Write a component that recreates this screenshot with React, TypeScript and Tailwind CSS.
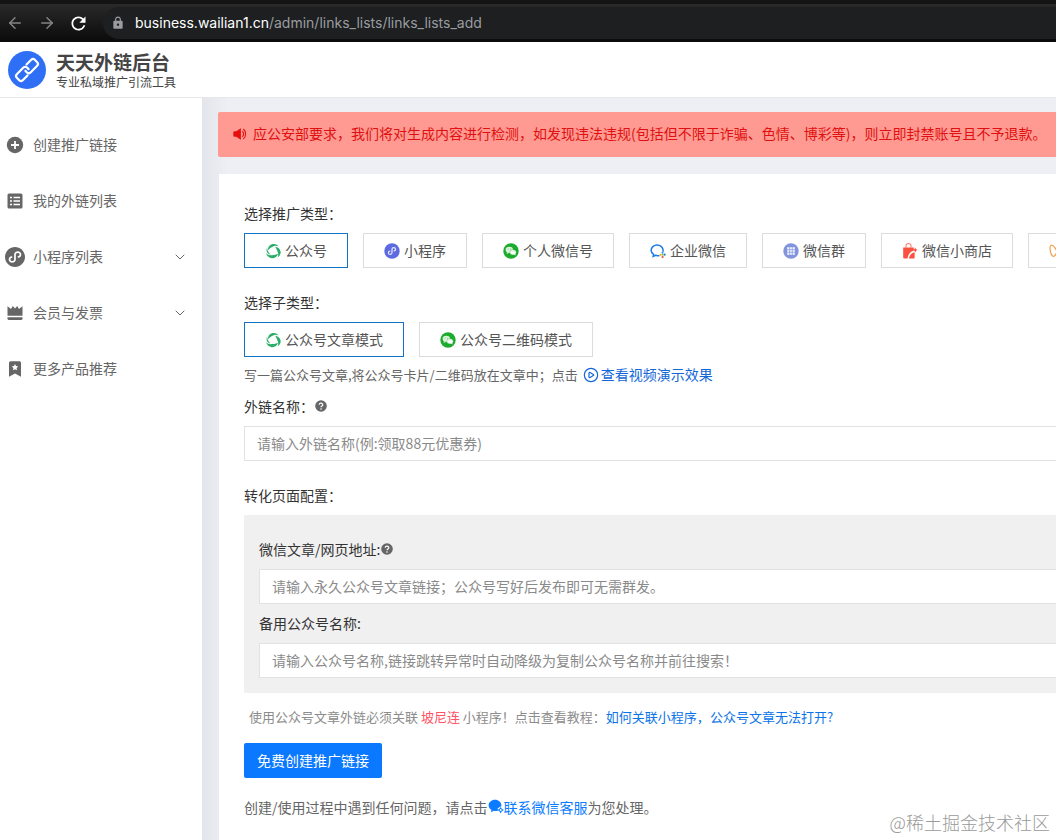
import React from 'react';
import { ArrowLeft, ArrowRight, ChevronDown, CirclePlay } from 'lucide-react';
import { RiMiniProgramFill } from 'react-icons/ri';
import { MdLock, MdRefresh } from 'react-icons/md';

interface IconProps {
  className?: string;
}

const LinkLogo: React.FC = () => (
  <svg viewBox="0 0 38 38" className="size-[38px] shrink-0" aria-hidden="true">
    <circle cx="19" cy="19" r="19" fill="#2f6ff5" />
    <g transform="rotate(-45 19 19)" fill="none" stroke="#fff" strokeWidth="2.200" strokeLinecap="round" strokeLinejoin="round">
      <path d="M15.500 23.200H8.800a2.500 2.500 0 0 1-2.500-2.500v-3.400a2.500 2.500 0 0 1 2.500-2.500h9.400a2.500 2.500 0 0 1 2.500 2.500v2.200" />
      <path d="M22.500 14.800h6.700a2.500 2.500 0 0 1 2.500 2.500v3.400a2.500 2.500 0 0 1-2.500 2.500h-9.400a2.500 2.500 0 0 1-2.500-2.500v-2.200" />
    </g>
  </svg>
);

const AddIcon: React.FC = () => (
  <svg viewBox="0 0 18 18" className="size-[18px]" aria-hidden="true">
    <circle cx="9" cy="9" r="8.200" fill="currentColor" />
    <path d="M9 5v8M5 9h8" stroke="#fff" strokeWidth="1.800" />
  </svg>
);

const ListIcon: React.FC = () => (
  <svg viewBox="0 0 18 18" className="size-[18px]" aria-hidden="true">
    <rect x="1.500" y="1.500" width="15" height="15" rx="1.500" fill="currentColor" />
    <path d="M4 5.500h2M7.500 5.500H14M4 9h2M7.500 9H14M4 12.500h2M7.500 12.500H14" stroke="#fff" strokeWidth="1.400" />
  </svg>
);

const CrownIcon: React.FC = () => (
  <svg viewBox="0 0 18 18" className="size-[18px]" fill="currentColor" aria-hidden="true">
    <path d="M1.500 2.200 5 5l1.800-3L9 4.600 11.200 2 13 5l3.500-2.800v9.600h-15z" />
    <path d="M1.500 13.300h15v1.200a1.500 1.500 0 0 1-1.500 1.500H3a1.500 1.500 0 0 1-1.500-1.500z" />
  </svg>
);

const BookmarkIcon: React.FC = () => (
  <svg viewBox="0 0 18 18" className="size-[18px]" aria-hidden="true">
    <path d="M4.500 1.200h9A1.500 1.500 0 0 1 15 2.700v14.100L9 13.500l-6 3.300V2.700a1.500 1.500 0 0 1 1.500-1.500z" fill="currentColor" />
    <path d="m9 4 1 2.100 2.300.3-1.700 1.600.4 2.300L9 9.200l-2 1.100.4-2.300-1.700-1.600L8 6.100z" fill="#fff" />
  </svg>
);

const OfficialIcon: React.FC<IconProps> = ({ className }) => (
  <svg viewBox="0 0 16 16" className={className} fill="#2aae67" aria-hidden="true">
    <path d="M3 7.300C2.600 3.600 5.600.8 9 1c2 .1 3.500 1 4.500 2.600-2-1.200-4-1-5.400-.1C6 4.400 4.700 5.600 3 7.300z" />
    <path d="M10.200 3.800c3.800.5 6.100 3.700 5.300 6.800-.4 1.700-1.500 3-3 3.800.9-1.700 1-3.400.3-5-.6-1.700-1.300-3.600-2.600-5.600z" />
    <path d="M13 10.800c-.7 3.200-4 5-7 4.200-2.500-.6-4.400-2.500-4.900-5 1.200 1.500 2.700 2.200 4.400 2.200 2.200 0 4.800-.2 7.500-1.400z" />
    <path d="M2 4.800C.8 8.300 2.300 11 5.500 11.600 3.800 10 2.600 8 2 4.800z" />
  </svg>
);

const WechatIcon: React.FC<IconProps> = ({ className }) => (
  <svg viewBox="0 0 16 16" className={className} aria-hidden="true">
    <circle cx="8" cy="8" r="7.700" fill="#1cab2c" />
    <ellipse cx="6.300" cy="6.800" rx="3.700" ry="3.100" fill="#d9f3dc" />
    <path d="m4 9-.4 1.900 2-1z" fill="#d9f3dc" />
    <ellipse cx="10" cy="9.300" rx="3.200" ry="2.600" fill="#fff" stroke="#1cab2c" strokeWidth=".4" />
    <path d="m11 11.500 1.500.9-.2-1.600z" fill="#fff" />
    <g fill="#1cab2c">
      <circle cx="5.100" cy="6" r=".4" />
      <circle cx="7.500" cy="6" r=".4" />
      <circle cx="9" cy="8.700" r=".3" />
      <circle cx="11" cy="8.700" r=".3" />
    </g>
  </svg>
);

const MiniIcon: React.FC<IconProps> = ({ className }) => (
  <svg viewBox="0 0 16 16" className={className} fill="none" aria-hidden="true">
    <circle cx="8" cy="8" r="7.700" fill="#5d6be0" />
    <path
      d="M5.900 8.200a1.800 1.600 0 1 0 2.100 1.600V6.200a1.800 1.600 0 1 1 2.100 1.600"
      stroke="#e6e9ff"
      strokeWidth="1.200"
      strokeLinecap="round"
    />
  </svg>
);

const WorkIcon: React.FC<IconProps> = ({ className }) => (
  <svg viewBox="0 0 16 16" className={className} fill="none" aria-hidden="true">
    <path
      d="M9.500 12.400c-1.200.3-2.700.3-3.900-.1l-2.400 1.200.4-2.200C2 10.200 1.100 8.800 1.100 7.200c0-2.900 2.700-5.100 6-5.100s6 2.200 6 5.100c0 .6-.1 1.100-.3 1.600"
      stroke="#1b7be8"
      strokeWidth="1.500"
    />
    <circle cx="12.500" cy="9.800" r="1" fill="#1b9be8" />
    <circle cx="14.600" cy="11.700" r="1.100" fill="#2a78c8" />
    <circle cx="12.600" cy="14" r="1.100" fill="#e8503a" />
    <circle cx="10.700" cy="11.800" r="1.100" fill="#f7b500" />
    <circle cx="12.700" cy="11.900" r=".8" fill="#7cc04b" />
  </svg>
);

const GroupIcon: React.FC<IconProps> = ({ className }) => (
  <svg viewBox="0 0 16 16" className={className} aria-hidden="true">
    <circle cx="8" cy="8" r="7.700" fill="#8295dc" />
    <rect x="4.200" y="4.200" width="7.600" height="7.600" fill="#fff" opacity=".9" />
    <path d="M4 6.700h8M4 9.300h8M6.700 4v8M9.300 4v8" stroke="#8295dc" strokeWidth=".7" />
  </svg>
);

const ShopIcon: React.FC<IconProps> = ({ className }) => (
  <svg viewBox="0 0 16 16" className={className} fill="none" aria-hidden="true">
    <path d="M1.200 4.500h10.600v3.300C8.500 8.500 6.300 10.800 5.500 15.600H2.200a1 1 0 0 1-1-1z" fill="#fa5140" />
    <path d="M12.600 9.300v5.300a1 1 0 0 1-1 1H6.900c.6-3.400 2.500-5.600 5.700-6.300z" fill="#fa5140" />
    <path d="M4 5V3a2.500 2.500 0 0 1 5 0v2" stroke="#fa8a7e" strokeWidth="1.200" />
    <path d="m13.300 4.600.8 1.600 1.700.7-1.700.8-.8 1.700-.8-1.700-1.600-.8 1.600-.7z" fill="#fa5140" />
  </svg>
);

const ChannelIcon: React.FC<IconProps> = ({ className }) => (
  <svg viewBox="0 0 16 16" className={className} fill="none" stroke="#f3a04b" strokeWidth="1.200" aria-hidden="true">
    <path d="M8 8.500C6.500 4.500 3.500 1.500 2 2.200c-1.700.8-.9 8.500 1.300 10.600C5 14.400 7 12 8 8.500z" />
    <path d="M8 8.500c1.500-4 4.500-7 6-6.300 1.700.8.900 8.500-1.300 10.600C11 14.400 9 12 8 8.500z" />
  </svg>
);

const HelpIcon: React.FC<IconProps> = ({ className }) => (
  <svg viewBox="0 0 12 12" className={className} fill="none" aria-hidden="true">
    <circle cx="6" cy="6" r="5.800" fill="#666" />
    <path d="M4.200 4.700a1.800 1.600 0 1 1 2.600 1.400c-.6.3-.8.500-.8 1.100" stroke="#fff" strokeWidth="1.200" />
    <circle cx="6" cy="9" r=".8" fill="#fff" />
  </svg>
);

const SpeakerIcon: React.FC = () => (
  <svg viewBox="0 0 14 14" className="size-[14px] shrink-0" fill="#e60f0f" aria-hidden="true">
    <path d="M1.500 4.200h1.700L7.900 1.300v11.400L3.200 9.800H1.500A1.200 1.200 0 0 1 .3 8.600V5.400a1.200 1.200 0 0 1 1.200-1.200z" />
    <path d="M9.300 4.200c1.700 1.300 1.700 4.300 0 5.600M10.300 2c3 2.200 3 7.800 0 10" fill="none" stroke="#e60f0f" strokeWidth="1.100" />
  </svg>
);

const ServiceIcon: React.FC = () => (
  <svg viewBox="0 0 16 16" className="size-4 shrink-0" fill="#0b7cff" aria-hidden="true">
    <path d="M7 .8c3.600 0 6.400 2.500 6.400 5.500l-.1 1.300c-1.500-.5-1.900 1.100-3.300 1.500-.8 1 .2 1.600.1 2.400-1.200.6-3 .7-4.300.3L3 13.200l.4-2.400C1.600 9.800.6 8.200.6 6.300.6 3.300 3.400.8 7 .8z" />
    <path d="m12.700 8 1.100 1.800 2.100 1.200-2.100 1.300-1.100 2.100-1.300-2.100-1.900-1.300 1.900-1.200z" />
    <circle cx="12.700" cy="11.100" r="1" fill="#fff" />
  </svg>
);

const menu = [
  { label: '创建推广链接', icon: <AddIcon /> },
  { label: '我的外链列表', icon: <ListIcon /> },
  { label: '小程序列表', icon: <RiMiniProgramFill className="-m-[3px] size-6" />, more: true },
  { label: '会员与发票', icon: <CrownIcon />, more: true },
  { label: '更多产品推荐', icon: <BookmarkIcon /> },
];

const types = [
  { label: '公众号', Icon: OfficialIcon },
  { label: '小程序', Icon: MiniIcon },
  { label: '个人微信号', Icon: WechatIcon },
  { label: '企业微信', Icon: WorkIcon },
  { label: '微信群', Icon: GroupIcon },
  { label: '微信小商店', Icon: ShopIcon },
  { label: '视频号', Icon: ChannelIcon },
];

const modes = [
  { label: '公众号文章模式', Icon: OfficialIcon },
  { label: '公众号二维码模式', Icon: WechatIcon },
];

interface OptionProps {
  label: string;
  Icon: React.FC<IconProps>;
  active: boolean;
  onClick: () => void;
}

const OptionButton: React.FC<OptionProps> = ({ label, Icon, active, onClick }) => (
  <button
    type="button"
    aria-pressed={active}
    onClick={onClick}
    className={`flex h-[35px] shrink-0 items-center gap-1 border px-5 text-[#555] ${active ? 'border-[#1272c4]' : 'border-[#dcdcdc]'}`}
  >
    <Icon className="size-4" />
    <span className="pb-0.5">{label}</span>
  </button>
);

const inputClass =
  'mt-[11px] block h-[35px] w-full border border-r-0 border-[#e2e2e2] bg-white px-3 pb-0.5 text-[#333] outline-none placeholder:text-[#8a8a8a]';

export default function App() {
  const [type, setType] = React.useState(0);
  const [mode, setMode] = React.useState(0);

  return (
    <div className="relative flex min-h-screen flex-col overflow-hidden bg-white font-['Noto_Sans_CJK_SC',sans-serif] text-[14px] leading-[18px] text-[#333]">
      <div className="flex h-[42px] items-center border-t-4 border-[#141414] bg-linear-to-b from-[#2a2a2b] to-[#0b0b0b] text-[#858585]">
        <button type="button" aria-label="后退" className="ml-1.5">
          <ArrowLeft size={18} />
        </button>
        <button type="button" aria-label="前进" className="ml-3.5">
          <ArrowRight size={18} />
        </button>
        <button type="button" aria-label="刷新" className="ml-3 text-white">
          <MdRefresh size={21} />
        </button>
        <div className="ml-3.5 flex h-8 flex-1 items-center gap-2.5 rounded-l-full bg-[#1d1f20] pl-2 font-[Inter,sans-serif] text-[#9a9da0]">
          <MdLock size={14} />
          <span>
            <span className="text-white">business.wailian1.cn</span>/admin/links_lists/links_lists_add
          </span>
        </div>
      </div>

      <header className="flex h-14 items-center gap-2.5 border-b border-[#e8e8ea] px-2">
        <LinkLogo />
        <div className="text-[#444]">
          <h1 className="text-[19px] leading-6 font-bold">天天外链后台</h1>
          <p className="text-[12px] leading-4">专业私域推广引流工具</p>
        </div>
      </header>

      <div className="flex flex-1">
        <nav className="w-[202px] shrink-0 pt-[19px]">
          {menu.map((item) => (
            <a key={item.label} href="#" className="flex h-14 items-center gap-[9px] pr-3.5 pl-1.5 text-[#666]">
              {item.icon}
              <span className="flex-1 pb-0.5">{item.label}</span>
              {item.more && <ChevronDown size={16} strokeWidth={1.5} />}
            </a>
          ))}
        </nav>

        <main className="min-w-0 flex-1 bg-linear-to-r from-[#e4e5ea] to-[#eeeff5] to-3% pt-3.5 pl-4">
          <div className="flex h-[45px] items-center gap-1.5 rounded-l-xs bg-[#ff9a92] pb-0.5 pl-[15px] whitespace-nowrap text-[#e01010]">
            <SpeakerIcon />
            <span className="pb-0.5">
              应公安部要求，我们将对生成内容进行检测，如发现违法违规(包括但不限于诈骗、色情、博彩等)，则立即封禁账号且不予退款。
            </span>
          </div>

          <div className="mt-[17px] ml-px min-h-[666px] bg-white pt-[30px] pl-[25px]">
            <h2>选择推广类型：</h2>
            <div className="mt-[11px] flex gap-[15px] overflow-hidden">
              {types.map((item, i) => (
                <OptionButton key={item.label} {...item} active={type === i} onClick={() => setType(i)} />
              ))}
            </div>

            <h2 className="mt-[25px]">选择子类型：</h2>
            <div className="mt-[11px] flex gap-[15px]">
              {modes.map((item, i) => (
                <OptionButton key={item.label} {...item} active={mode === i} onClick={() => setMode(i)} />
              ))}
            </div>

            <p className="mt-2 flex items-center text-[13px] text-[#666]">
              写一篇公众号文章,将公众号卡片/二维码放在文章中；点击
              <a href="#" className="ml-[5px] flex items-center gap-0.5 text-[14px] text-[#1266d8]">
                <CirclePlay size={16} strokeWidth={1.8} />
                <span className="pb-0.5">查看视频演示效果</span>
              </a>
            </p>

            <label htmlFor="link-name" className="mt-3 flex items-center">
              外链名称：
              <HelpIcon className="ml-px size-3" />
            </label>
            <input id="link-name" type="text" placeholder="请输入外链名称(例:领取88元优惠券)" className={inputClass} />

            <h2 className="mt-[25px]">转化页面配置：</h2>
            <div className="mt-[11px] bg-[#f0f0f0] pt-[25px] pb-[15px] pl-[15px]">
              <label htmlFor="article-url" className="flex items-center gap-px">
                微信文章/网页地址:
                <HelpIcon className="size-3" />
              </label>
              <input
                id="article-url"
                type="text"
                placeholder="请输入永久公众号文章链接；公众号写好后发布即可无需群发。"
                className={inputClass}
              />
              <label htmlFor="account-name" className="mt-2.5 block">
                备用公众号名称:
              </label>
              <input
                id="account-name"
                type="text"
                placeholder="请输入公众号名称,链接跳转异常时自动降级为复制公众号名称并前往搜索！"
                className={inputClass}
              />
            </div>

            <p className="mt-[15px] pl-[5px] text-[13px] text-[#8c8c8c]">
              使用公众号文章外链必须关联 <span className="text-[#ff5364]">坡尼连</span> 小程序！点击查看教程：
              <a href="#" className="text-[#0b74e8]">如何关联小程序，</a>
              <a href="#" className="text-[#0b74e8]">公众号文章无法打开?</a>
            </p>
            <button type="button" className="mt-[17px] h-[35px] rounded-xs bg-[#0a78ff] px-[13px] pb-0.5 text-white">
              免费创建推广链接
            </button>
            <p className="mt-5 flex items-center text-[#666]">
              创建/使用过程中遇到任何问题，请点击
              <a href="#" className="flex items-center text-[#0b7cff]">
                <ServiceIcon />
                联系微信客服
              </a>
              为您处理。
            </p>
          </div>
        </main>
      </div>

      <div className="absolute right-1.5 bottom-2 text-[18px] leading-5 font-light text-[#9a9a9a]">@稀土掘金技术社区</div>
    </div>
  );
}
